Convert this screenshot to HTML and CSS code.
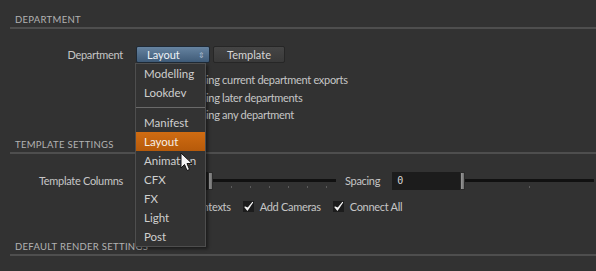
FILE: index.html
```html
<!DOCTYPE html>
<html lang="en">
<head>
    <meta charset="UTF-8">
    <meta name="viewport" content="width=device-width, initial-scale=1.0">
    <title>Department Settings</title>
    <link rel="stylesheet" href="styles.css">
</head>
<body>
    <div class="panel">
        <div class="section-head">Department</div>

        <div class="row dept-row">
            <label class="label">Department</label>
            <div class="controls">
                <div class="menu-wrap">
                    <button class="combo">Layout <span class="combo-arrows">&#8661;</span></button>
                    <ul class="menu">
                        <li>Modelling</li>
                        <li>Lookdev</li>
                        <li class="sep"></li>
                        <li>Manifest</li>
                        <li class="active">Layout</li>
                        <li>Animation</li>
                        <li>CFX</li>
                        <li>FX</li>
                        <li>Light</li>
                        <li>Post</li>
                    </ul>
                </div>
                <button class="btn">Template</button>
            </div>
        </div>

        <div class="options">
            <label class="option"><span class="radio"></span>Using current department exports</label>
            <label class="option"><span class="radio"></span>Using later departments</label>
            <label class="option"><span class="radio"></span>Using any department</label>
        </div>

        <div class="section-head second">Template Settings</div>

        <div class="row slider-row">
            <label class="label">Template Columns</label>
            <div class="controls">
                <div class="slider first">
                    <div class="field"></div>
                    <div class="handle"></div>
                    <div class="track"></div>
                </div>
                <span class="inline-label">Spacing</span>
                <div class="slider grow">
                    <div class="field mono">0</div>
                    <div class="handle"></div>
                    <div class="track"></div>
                </div>
            </div>
        </div>

        <div class="row check-row">
            <span></span>
            <div class="controls checks">
                <label class="check"><span class="box"></span>Create Contexts</label>
                <label class="check"><span class="box on"><svg viewBox="0 0 11 11" width="11" height="11"><path d="M2 6 L4.5 9 L9.5 1.5 L5 7.2 Z" fill="#f2f2f2" stroke="#f2f2f2" stroke-width="1.2" stroke-linejoin="round"/></svg></span>Add Cameras</label>
                <label class="check"><span class="box on"><svg viewBox="0 0 11 11" width="11" height="11"><path d="M2 6 L4.5 9 L9.5 1.5 L5 7.2 Z" fill="#f2f2f2" stroke="#f2f2f2" stroke-width="1.2" stroke-linejoin="round"/></svg></span>Connect All</label>
            </div>
        </div>

        <div class="section-head third">Default Render Settings</div>

        <svg class="cursor" viewBox="0 0 13 20" width="13" height="20">
            <path d="M1 1 L1 16 L4.5 12.5 L7 18.5 L9.5 17.5 L7 11.5 L12 11.5 Z" fill="#f4f4f4" stroke="#111" stroke-width="1"/>
        </svg>
    </div>
</body>
</html>
```

FILE: styles.css
```css
body {
    margin: 0;
    background: #323232;
    font-family: Lato, 'Open Sans', sans-serif;
    font-size: 11px;
    letter-spacing: -0.3px;
    color: #c6c6c6;
}

.panel {
    position: relative;
    height: 271px;
    padding: 13px 0 0 10px;
    box-sizing: border-box;
    overflow: hidden;
}

.section-head {
    height: 14px;
    line-height: 14px;
    padding-left: 5px;
    border-bottom: 2px solid #4e4e4e;
    font-size: 9.5px;
    letter-spacing: 0.3px;
    text-transform: uppercase;
    color: #b2b2b2;
}

.section-head.second {
    margin-top: 14px;
}

.section-head.third {
    margin-top: 26px;
}

.row {
    display: grid;
    grid-template-columns: 113px 1fr;
    column-gap: 13px;
    align-items: center;
}

.label {
    text-align: right;
}

.controls {
    display: flex;
    align-items: center;
}

.dept-row {
    margin-top: 17px;
    height: 17px;
}

.menu-wrap {
    position: relative;
}

.combo {
    width: 74px;
    height: 17px;
    padding: 0 4px 0 10px;
    display: flex;
    align-items: center;
    justify-content: space-between;
    border: 1px solid #1f2a36;
    border-radius: 2px;
    background: linear-gradient(#6683a0, #3f5b78);
    color: #eef2f6;
    font-family: inherit;
    font-size: 11px;
}

.combo-arrows {
    font-size: 8px;
    color: #a9bccd;
}

.btn {
    width: 72px;
    height: 17px;
    margin-left: 3px;
    border: 1px solid #262626;
    border-radius: 2px;
    background: linear-gradient(#454545, #393939);
    color: #d6d6d6;
    font-family: inherit;
    font-size: 11px;
}

.menu {
    position: absolute;
    top: 17px;
    left: -1px;
    width: 69px;
    margin: 0;
    padding: 0;
    list-style: none;
    background: #333333;
    border: 1px solid #4e4e4e;
    box-shadow: 2px 2px 3px rgba(0, 0, 0, 0.45);
    z-index: 2;
}

.menu li {
    height: 19px;
    line-height: 19px;
    padding-left: 8px;
    font-size: 11.5px;
    letter-spacing: 0;
    color: #cfcfcf;
}

.menu li.sep {
    height: 11px;
    position: relative;
}

.menu li.sep::after {
    content: "";
    position: absolute;
    left: 0;
    right: 0;
    top: 5px;
    border-top: 1px solid #6a6a6a;
}

.menu li.active {
    background: linear-gradient(#d06c12, #b65a0a);
    color: #f6efe6;
}

.options {
    margin: 8px 0 0 169px;
}

.option {
    display: flex;
    align-items: center;
    gap: 5px;
    height: 17.5px;
}

.radio {
    width: 10px;
    height: 10px;
    border-radius: 50%;
    background: #1e1e1e;
}

.slider-row {
    margin-top: 18px;
    height: 18px;
}

.slider {
    display: flex;
    align-items: center;
    height: 18px;
}

.slider.first {
    width: 200px;
}

.slider.grow {
    flex: 1;
    margin-right: 2px;
}

.field {
    width: 72px;
    height: 18px;
    line-height: 18px;
    padding-left: 5px;
    box-sizing: border-box;
    background: #1c1c1c;
    color: #d8d8d8;
}

.slider.grow .field {
    width: 68px;
}

.mono {
    font-family: 'DejaVu Sans Mono', monospace;
    font-size: 10px;
}

.handle {
    width: 5px;
    height: 18px;
    box-sizing: border-box;
    background: linear-gradient(90deg, #9a9a9a, #6e6e6e);
    border: 1px solid #2a2a2a;
}

.track {
    flex: 1;
    height: 9px;
    margin-top: 5px;
    background:
        linear-gradient(#111, #111) top / 100% 3px no-repeat,
        repeating-linear-gradient(90deg, transparent 0 18px, #5c5c5c 18px 19px) bottom / 100% 2px no-repeat;
}

.slider.grow .track {
    background:
        linear-gradient(#111, #111) top / 100% 3px no-repeat,
        repeating-linear-gradient(90deg, transparent 0 64px, #5c5c5c 64px 65px) bottom / 100% 2px no-repeat;
}

.inline-label {
    margin: 0 12px 0 9px;
}

.check-row {
    margin-top: 10px;
    height: 14px;
}

.checks {
    gap: 12px;
    padding-left: 4px;
}

.check {
    display: flex;
    align-items: center;
    gap: 6px;
}

.box {
    width: 11px;
    height: 11px;
    background: #1c1c1c;
    display: flex;
}

.cursor {
    position: absolute;
    left: 180px;
    top: 152px;
    z-index: 3;
}
```
